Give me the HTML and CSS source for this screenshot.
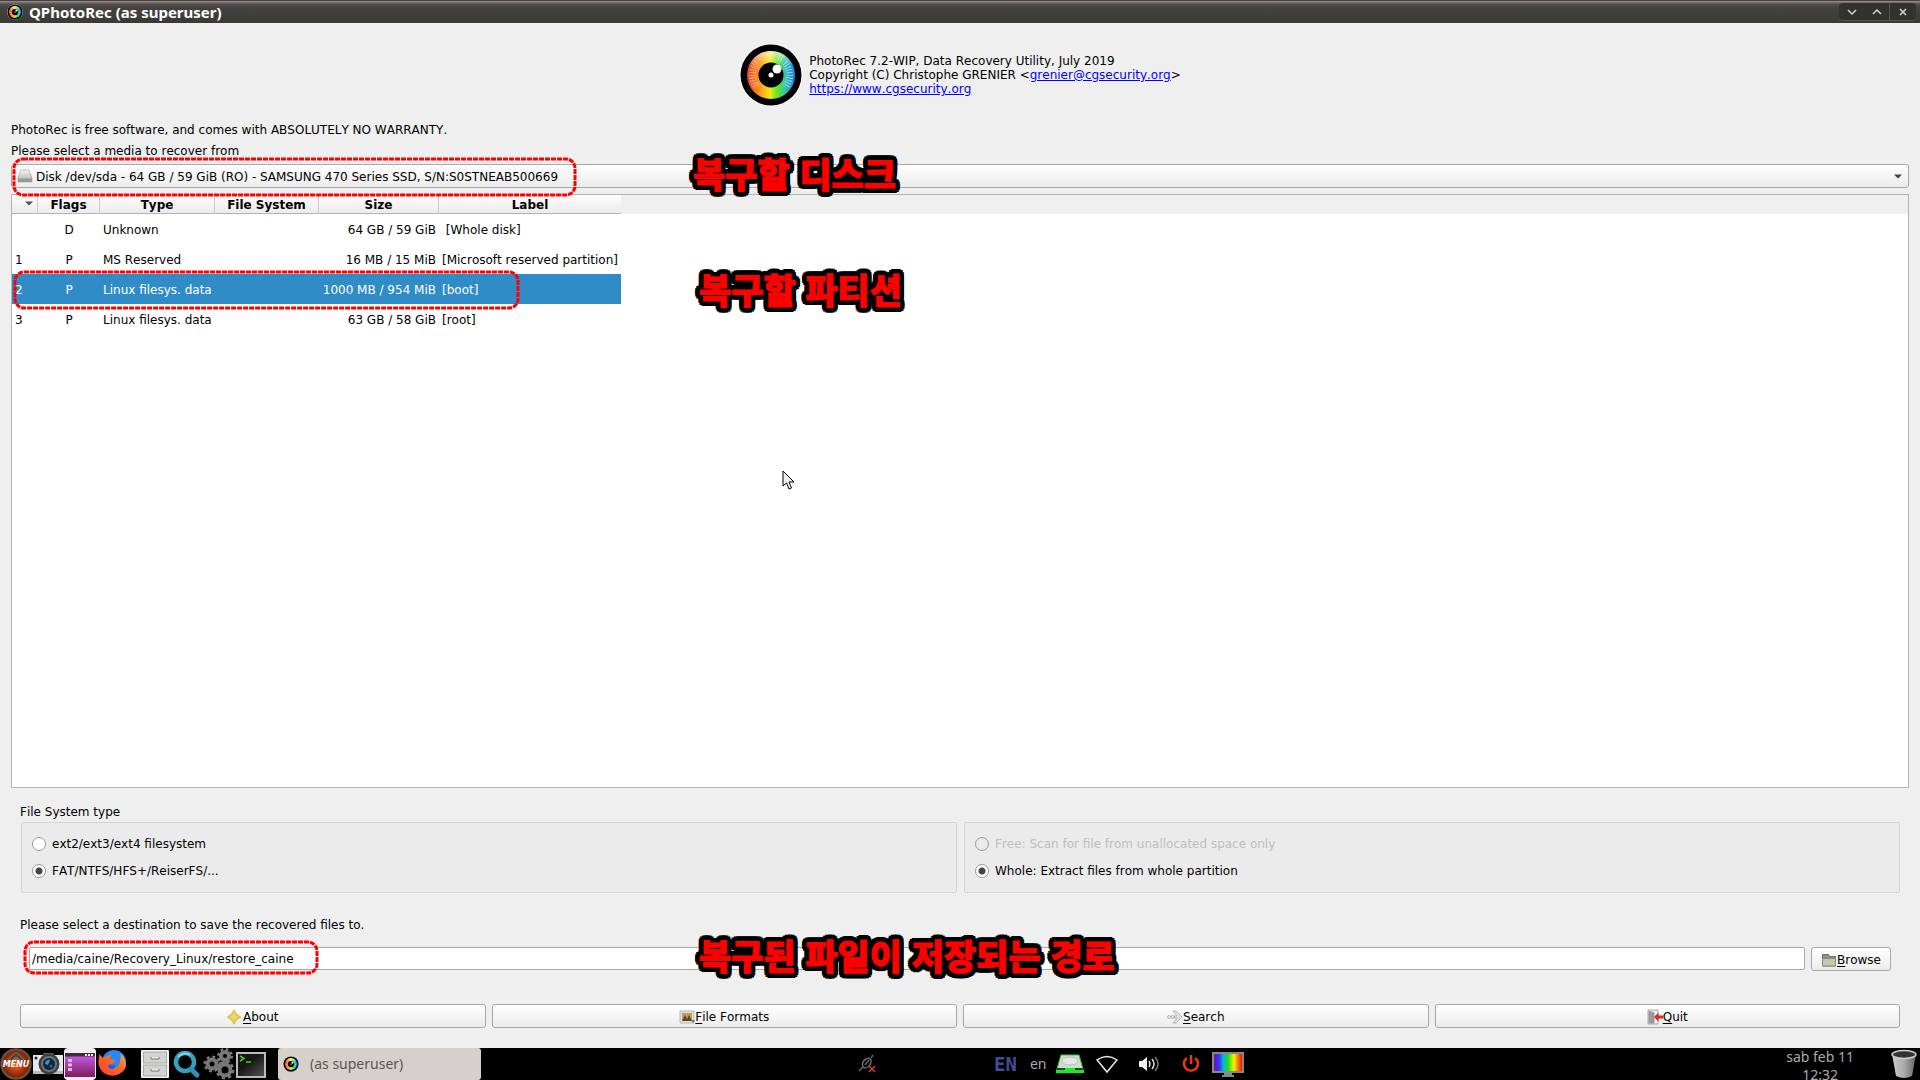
FILE: index.html
```html
<!DOCTYPE html>
<html lang="en">

<head>
    <meta charset="UTF-8">
    <meta name="viewport" content="width=device-width, initial-scale=1.0">
    <title>QPhotoRec (as superuser)</title>
    <link rel="stylesheet" href="styles.css">
</head>

<body>
    <!-- Shared icon shapes -->
    <svg class="defs" aria-hidden="true">
        <defs>
            <linearGradient id="rainbow">
                <stop offset="0" stop-color="#e8402a" />
                <stop offset=".25" stop-color="#ff9020" />
                <stop offset=".48" stop-color="#f2ea10" />
                <stop offset=".62" stop-color="#66e820" />
                <stop offset=".8" stop-color="#30c0b0" />
                <stop offset="1" stop-color="#2080f0" />
            </linearGradient>
            <linearGradient id="gloss" x2="0" y2="1">
                <stop offset="0" stop-color="#fff" stop-opacity=".65" />
                <stop offset=".3" stop-color="#fff" stop-opacity="0" />
            </linearGradient>
            <linearGradient id="metal" x2="0" y2="1">
                <stop offset="0" stop-color="#f4f4f4" />
                <stop offset="1" stop-color="#aaa" />
            </linearGradient>
            <symbol id="eye" viewBox="0 0 64 64">
                <circle cx="32" cy="32" r="31.5" fill="#fff" />
                <circle cx="32" cy="32" r="30.5" fill="#000" />
                <circle cx="32" cy="32" r="24" fill="url(#rainbow)" />
                <circle cx="32" cy="32" r="24" fill="url(#gloss)" />
                <g fill="none" stroke="#fff" stroke-width="7" stroke-dasharray=".7 1.9" opacity=".65">
                    <path d="M18 20a18 18 0 0 0 0 24M46 20a18 18 0 0 1 0 24" />
                    <path d="M40 14a20 20 0 0 1 4 2" />
                </g>
                <circle cx="32" cy="32" r="12.5" fill="#000" />
                <circle cx="38" cy="26" r="4.5" fill="#fff" />
                <circle cx="32" cy="32" r="2.5" fill="#fff" />
            </symbol>
        </defs>
    </svg>

    <header class="titlebar">
        <svg class="title-icon"><use href="#eye" /></svg>
        <h1>QPhotoRec (as superuser)</h1>
        <div class="window-controls">
            <button aria-label="Minimize"><svg viewBox="0 0 10 10"><path d="M1 3l4 4 4-4" /></svg></button>
            <button aria-label="Maximize"><svg viewBox="0 0 10 10"><path d="M1 7l4-4 4 4" /></svg></button>
            <button class="close" aria-label="Close"><svg viewBox="0 0 10 10"><path d="M2 2l6 6M8 2L2 8" /></svg></button>
        </div>
    </header>

    <main class="window">
        <section class="about">
            <svg class="logo"><use href="#eye" /></svg>
            <p>PhotoRec 7.2-WIP, Data Recovery Utility, July 2019<br>
                Copyright (C) Christophe GRENIER &lt;<a href="mailto:grenier@cgsecurity.org">grenier@cgsecurity.org</a>&gt;<br>
                <a href="https://www.cgsecurity.org">https://www.cgsecurity.org</a></p>
        </section>

        <p class="line">PhotoRec is free software, and comes with ABSOLUTELY NO WARRANTY.</p>
        <label class="line media-label" for="media">Please select a media to recover from</label>
        <div class="combo">
            <svg class="disk-icon" viewBox="0 0 16 16">
                <path d="M4 2h8l3 8v4H1v-4z" fill="url(#metal)" stroke="#999" stroke-width=".6" />
                <path d="M1 10.500h14V14H1z" fill="#999" />
            </svg>
            <select id="media">
                <option>Disk /dev/sda - 64 GB / 59 GiB (RO) - SAMSUNG 470 Series SSD, S/N:S0STNEAB500669</option>
            </select>
            <svg class="combo-arrow" viewBox="0 0 8 5"><path d="M0 .5h8L4 4.500z" /></svg>
        </div>

        <div class="partitions">
            <table>
                <thead>
                    <tr>
                        <th class="col-num" aria-label="Number"><svg class="sort" viewBox="0 0 8 5"><path d="M0 .5h8L4 4.500z" /></svg></th>
                        <th class="col-flags">Flags</th>
                        <th class="col-type">Type</th>
                        <th class="col-fs">File System</th>
                        <th class="col-size">Size</th>
                        <th class="col-label">Label</th>
                    </tr>
                </thead>
                <tbody>
                    <tr>
                        <td></td>
                        <td>D</td>
                        <td>Unknown</td>
                        <td></td>
                        <td>64 GB / 59 GiB</td>
                        <td>&nbsp;[Whole disk]</td>
                    </tr>
                    <tr>
                        <td>1</td>
                        <td>P</td>
                        <td>MS Reserved</td>
                        <td></td>
                        <td>16 MB / 15 MiB</td>
                        <td>[Microsoft reserved partition]</td>
                    </tr>
                    <tr class="selected">
                        <td>2</td>
                        <td>P</td>
                        <td>Linux filesys. data</td>
                        <td></td>
                        <td>1000 MB / 954 MiB</td>
                        <td>[boot]</td>
                    </tr>
                    <tr>
                        <td>3</td>
                        <td>P</td>
                        <td>Linux filesys. data</td>
                        <td></td>
                        <td>63 GB / 58 GiB</td>
                        <td>[root]</td>
                    </tr>
                </tbody>
            </table>
        </div>

        <div class="options">
            <p class="line">File System type</p>
            <div class="groups">
                <div class="group">
                    <label><input type="radio" name="fs">ext2/ext3/ext4 filesystem</label>
                    <label><input type="radio" name="fs" checked>FAT/NTFS/HFS+/ReiserFS/...</label>
                </div>
                <div class="group">
                    <label class="disabled"><input type="radio" name="scan" disabled>Free: Scan for file from unallocated space only</label>
                    <label><input type="radio" name="scan" checked>Whole: Extract files from whole partition</label>
                </div>
            </div>

            <label class="line" for="dest">Please select a destination to save the recovered files to.</label>
            <div class="destination">
                <input type="text" id="dest" value="/media/caine/Recovery_Linux/restore_caine">
                <button class="btn browse">
                    <svg viewBox="0 0 16 16">
                        <path d="M1.500 14V2.500h6l1 2h6V14z" fill="#8d937c" stroke="#6f7562" />
                        <path d="M1.500 6.500h13V14h-13z" fill="#c3c8b2" stroke="#858b76" />
                    </svg><span><u>B</u>rowse</span>
                </button>
            </div>

            <div class="buttons">
                <button class="btn">
                    <svg viewBox="0 0 16 16"><path d="M7 1.500Q8.500 6 13 8 8.500 10 7 14.500 5.500 10 1 8 5.500 6 7 1.500z" fill="#f0dc60" stroke="#dcc65a" stroke-width="2" stroke-linejoin="round" /></svg><span><u>A</u>bout</span>
                </button>
                <button class="btn">
                    <svg viewBox="0 0 16 16">
                        <path d="M1 2h14v12H1z" fill="#ddd" stroke="#bbb" />
                        <path d="M3 4h10v8H3z" fill="#c89c50" />
                        <path d="M3 12l3-6 2 4 2-4 3 6z" fill="#5a4630" />
                        <path d="M12 11h4l-2 3z" fill="#777" />
                    </svg><span><u>F</u>ile Formats</span>
                </button>
                <button class="btn">
                    <svg viewBox="0 0 16 16">
                        <path d="M6 2h3l6 6-6 6H6l4-5H7V7h3z" fill="#e2e2e2" stroke="#aaa" stroke-width=".8" />
                        <circle cx="2" cy="8" r="1.500" fill="#eee" stroke="#aaa" stroke-width=".8" />
                        <circle cx="5.500" cy="8" r="1.500" fill="#eee" stroke="#aaa" stroke-width=".8" />
                    </svg><span><u>S</u>earch</span>
                </button>
                <button class="btn">
                    <svg viewBox="0 0 16 16">
                        <path d="M1 1h10v14H1z" fill="#f0f0f0" stroke="#aaa" />
                        <path d="M1.500 1.500l6 2v11h-6z" fill="#999" />
                        <path d="M7 8l4.500-4.500v3H16v3h-4.500v3z" fill="#e02a20" />
                    </svg><span><u>Q</u>uit</span>
                </button>
            </div>
        </div>
    </main>

    <footer class="taskbar">
        <nav class="launchers">
            <button aria-label="Menu">
                <svg viewBox="0 0 32 32">
                    <radialGradient id="menu-bg">
                        <stop offset=".3" stop-color="#e04a10" />
                        <stop offset="1" stop-color="#6a1c04" />
                    </radialGradient>
                    <circle cx="16" cy="16" r="14.500" fill="url(#menu-bg)" stroke="#6d4c38" stroke-width="2.500" />
                    <path d="M6 14L16 4l10 10-3 1-7-6-7 6z" fill="#444" stroke="#999" stroke-width=".6" />
                    <text x="16" y="19" class="menu-text">MENU</text>
                </svg>
            </button>
            <button aria-label="Camera">
                <svg viewBox="0 0 32 32">
                    <path d="M1 7h30v19H1z" fill="#e9e9e9" />
                    <path d="M12 5h9l2 4H10z" fill="#666" />
                    <path d="M1 23h30v3H1z" fill="#bbb" />
                    <circle cx="4" cy="10" r="1.500" fill="#222" />
                    <circle cx="17" cy="16" r="10.500" fill="#3a4146" />
                    <circle cx="17" cy="16" r="8" fill="#6a7478" />
                    <circle cx="17" cy="16" r="6" fill="#182430" />
                    <path d="M13 16a4 4 0 0 1 5-4l-2 5z" fill="#2a9ae8" />
                    <circle cx="19" cy="18" r="1.500" fill="#1a6ab8" />
                </svg>
            </button>
            <button aria-label="Desktop">
                <svg viewBox="0 0 32 32">
                    <linearGradient id="desk-bg" x2="0" y2="1">
                        <stop offset="0" stop-color="#d061f8" />
                        <stop offset="1" stop-color="#7d1c58" />
                    </linearGradient>
                    <rect width="32" height="32" rx="4" fill="#f1eef1" />
                    <path d="M1 5h30v24H1z" fill="url(#desk-bg)" />
                    <path d="M1 5h30v3.500H1z" fill="#3b3038" />
                    <path d="M21 6h2v2h-2zM24 6h2v2h-2zM27 6h2v2h-2z" fill="#eee" />
                    <path d="M4 11h4v3H4zM4 15.500h4v3H4zM4 20h4v3H4z" fill="#dbb9dd" />
                </svg>
            </button>
            <button aria-label="Firefox">
                <svg viewBox="0 0 32 32">
                    <linearGradient id="fox" x1="0" y1="1" x2="1" y2="0">
                        <stop offset="0" stop-color="#ff3b3b" />
                        <stop offset=".6" stop-color="#ff6a20" />
                        <stop offset="1" stop-color="#ffb52e" />
                    </linearGradient>
                    <circle cx="18" cy="14" r="12" fill="#2887f5" />
                    <path d="M3 6l4 4q2-2 5-2l3-2-1 5 5 1q0 3-4 4l-3 1q2 5 7 3 5-2 5-7l1-5-1-3q6 5 6 13A14 13.500 0 1 1 3 10z" fill="url(#fox)" />
                    <path d="M12 17q3-1 7 0 1 4-4 4-3 0-3-4z" fill="#2361d8" />
                </svg>
            </button>
            <button class="group-start" aria-label="Files">
                <svg viewBox="0 0 32 32">
                    <rect x="2" y="2" width="28" height="28" rx="1" fill="#f2f2f0" />
                    <rect x="4.500" y="4" width="23" height="11" fill="#d2d2d0" stroke="#aaa" />
                    <rect x="4.500" y="17" width="23" height="11" fill="#d2d2d0" stroke="#aaa" />
                    <path d="M12 9v2h8V9M12 21v2h8v-2" fill="#eee" stroke="#777" />
                </svg>
            </button>
            <button aria-label="Find">
                <svg viewBox="0 0 32 32">
                    <circle cx="14" cy="14" r="9" fill="none" stroke="#36a0bf" stroke-width="4.500" />
                    <path d="M7 9a9 9 0 0 1 12-2" fill="none" stroke="#8cd3e6" stroke-width="2" />
                    <path d="M20 21l6 6" stroke="#3292b2" stroke-width="5" stroke-linecap="round" />
                </svg>
            </button>
            <button aria-label="Settings">
                <svg viewBox="0 0 32 32" fill="none" stroke="#777">
                    <g stroke-width="4">
                        <circle cx="9" cy="16" r="4.500" />
                        <circle cx="22" cy="8" r="4" />
                        <circle cx="22" cy="22" r="5.500" />
                    </g>
                    <g stroke-width="3">
                        <circle cx="9" cy="16" r="7" stroke-dasharray="2.750 2.750" />
                        <circle cx="22" cy="8" r="6.500" stroke-dasharray="2.550 2.550" />
                        <circle cx="22" cy="22" r="8" stroke-dasharray="3.140 3.140" />
                    </g>
                </svg>
            </button>
            <button aria-label="Terminal">
                <svg viewBox="0 0 32 32">
                    <linearGradient id="term" x2="1" y2="1">
                        <stop offset=".4" stop-color="#151515" />
                        <stop offset="1" stop-color="#555" />
                    </linearGradient>
                    <rect x="2" y="5" width="28" height="24" fill="url(#term)" stroke="#bbb" stroke-width="2" />
                    <path d="M5 8l4 2.500L5 13M11 14h5" fill="none" stroke="#35d81c" stroke-width="1.500" />
                </svg>
            </button>
        </nav>
        <button class="task">
            <svg><use href="#eye" /></svg>
            (as superuser)
        </button>
        <div class="tray">
            <svg class="plug" viewBox="0 0 20 20">
                <path d="M2 17l4-4M14 4l2-3M6 13q-2-5 3-8l3-1 2 2q0 5-3 7-3 2-5 0zM8 11l4-5" fill="none" stroke="#666" stroke-width="1.500" />
                <path d="M12 12l6 6M18 12l-6 6" stroke="#d84a30" stroke-width="1.300" />
            </svg>
            <span class="layout">EN</span>
            <span class="lang">en</span>
            <svg class="mount" viewBox="0 0 32 32">
                <path d="M7 7h18l4 14v3H3v-3z" fill="#cfdcd0" stroke="#3c3" />
                <ellipse cx="16" cy="13" rx="8" ry="4" fill="#e2e9e2" stroke="#b0c9b2" />
                <path d="M3 20h26v2H3z" fill="#2c4030" />
                <path d="M2 22h28v3H2zM11 20h10v3H11z" fill="#19ed19" />
            </svg>
            <svg class="wifi" viewBox="0 0 24 24"><path d="M2 8q10-7 20 0L12 20z" fill="none" stroke="#eee" stroke-width="1.500" /></svg>
            <svg class="volume" viewBox="0 0 24 24">
                <path d="M2 9h3l5-4v14l-5-4H2z" fill="#eee" />
                <path d="M12 9q2 3 0 6M15 7q4 5 0 10" fill="none" stroke="#ddd" stroke-width="1.500" />
                <path d="M18 5q6 7 0 14" fill="none" stroke="#777" stroke-width="1.500" />
            </svg>
            <svg class="power" viewBox="0 0 24 24"><path d="M8 6a7 7 0 1 0 8 0M12 3v9" fill="none" stroke="#e8380d" stroke-width="2.500" /></svg>
            <svg class="screen" viewBox="0 0 32 32">
                <linearGradient id="bars">
                    <stop offset="0" stop-color="#7a0a9a" />
                    <stop offset=".2" stop-color="#3a30ff" />
                    <stop offset=".35" stop-color="#00b8e0" />
                    <stop offset=".5" stop-color="#18e018" />
                    <stop offset=".7" stop-color="#f4f400" />
                    <stop offset=".85" stop-color="#ff6a00" />
                    <stop offset="1" stop-color="#e00000" />
                </linearGradient>
                <path d="M1 5h30v19H1z" fill="url(#bars)" stroke="#888" stroke-width="2" />
                <path d="M12 25h8v2h2v2H10v-2h2z" fill="#888" />
            </svg>
        </div>
        <time class="clock">sab feb 11<br>12:32</time>
        <svg class="trash" viewBox="0 0 28 32">
            <linearGradient id="bin">
                <stop offset="0" stop-color="#ccc" />
                <stop offset=".5" stop-color="#aaa" />
                <stop offset="1" stop-color="#666" />
            </linearGradient>
            <path d="M2 6l4 22q8 4 16 0l4-22z" fill="url(#bin)" />
            <ellipse cx="14" cy="6.500" rx="12" ry="4" fill="#333" stroke="#ccc" stroke-width="1.500" />
        </svg>
    </footer>

    <!-- Notes drawn over the window -->
    <div class="marker marker-disk"><svg><rect /></svg></div>
    <div class="marker marker-partition"><svg><rect /></svg></div>
    <div class="marker marker-path"><svg><rect /></svg></div>
    <p class="note note-disk" lang="ko">복구할 디스크</p>
    <p class="note note-partition" lang="ko">복구할 파티션</p>
    <p class="note note-path" lang="ko">복구된 파일이 저장되는 경로</p>
    <svg class="cursor" viewBox="0 0 14 20"><path d="M1 1v15l3.500-3 2.500 6 2.500-1L7 12h5z" fill="#eee" stroke="#000" /></svg>
</body>

</html>
```

FILE: styles.css
```css
/* Global Styles */
* {
    margin: 0;
    padding: 0;
    box-sizing: border-box;
}

body {
    display: flex;
    flex-direction: column;
    height: 100vh;
    overflow: hidden;
    position: relative;
    background-color: #efefef;
    color: #000;
    font-family: 'DejaVu Sans', sans-serif;
    font-size: 12px;
    font-kerning: none;
    line-height: 14px;
}

button,
input,
select {
    font: inherit;
    font-kerning: none;
    color: inherit;
}

svg {
    display: block;
    flex: none;
}

.defs {
    position: absolute;
    width: 0;
    height: 0;
}

/* Title bar */
.titlebar {
    display: flex;
    align-items: center;
    flex: none;
    height: 23px;
    padding: 0 4px 0 7px;
    border-top: 1px solid #4a4040;
    background: linear-gradient(#989090, #55504c 3px, #45433f 6px, #3a3936);
    color: #fff;
}

.title-icon {
    width: 16px;
    height: 16px;
    margin-right: 6px;
}

h1 {
    font: bold 15px/20px 'Noto Sans', sans-serif;
}

.window-controls {
    display: flex;
    height: 18px;
    margin-left: auto;
    border-radius: 4px;
    border-bottom: 1px solid #55534f;
    background-color: #33322f;
}

.window-controls button {
    display: flex;
    align-items: center;
    justify-content: center;
    width: 25px;
    border: none;
    background: none;
}

.window-controls .close {
    width: 27px;
    border-left: 1px solid #55534f;
}

.window-controls svg {
    width: 10px;
    height: 10px;
    fill: none;
    stroke: #d8d4cc;
    stroke-width: 1.5;
}

/* Main window */
.window {
    display: flex;
    flex-direction: column;
    flex: 1;
    min-height: 0;
    padding: 20px 11px;
}

.about {
    display: flex;
    align-items: center;
    justify-content: center;
    gap: 6px;
    margin-bottom: 16px;
}

.logo {
    width: 64px;
    height: 64px;
}

.about a {
    color: #00f;
}

.line {
    display: block;
    margin-bottom: 7px;
}

.media-label {
    margin-bottom: 6px;
}

.combo {
    position: relative;
    flex: none;
    height: 24px;
    margin-bottom: 6px;
}

.combo select {
    width: 100%;
    height: 24px;
    padding: 2px 24px 0;
    border: 1px solid #a8a8a8;
    border-radius: 3px;
    background: linear-gradient(#fff, #ececec);
    appearance: none;
}

.disk-icon {
    position: absolute;
    left: 6px;
    top: 4px;
    width: 16px;
    height: 16px;
}

.combo-arrow {
    position: absolute;
    right: 7px;
    top: 10px;
    width: 8px;
    height: 5px;
    fill: #444;
}

/* Partition table */
.partitions {
    flex: 1;
    min-height: 0;
    margin-bottom: 17px;
    border: 1px solid #b4b4b4;
    background: linear-gradient(#efefef 19px, #fff 19px);
}

table {
    table-layout: fixed;
    width: 609px;
    border-collapse: separate;
    border-spacing: 0;
}

th {
    height: 19px;
    padding-top: 2px;
    border-right: 1px solid #ccc;
    border-bottom: 1px solid #b4b4b4;
    background: linear-gradient(#fdfdfd, #ebebeb);
    font-weight: bold;
}

th:last-child {
    border-right: none;
}

.col-num {
    width: 26px;
}

.col-flags {
    width: 62px;
}

.col-type {
    width: 115px;
}

.col-fs {
    width: 104px;
}

.col-size {
    width: 120px;
}

.sort {
    width: 8px;
    height: 5px;
    margin: 0 4px 4px auto;
    fill: #555;
}

td {
    height: 30px;
    padding: 2px 3px 0;
    white-space: nowrap;
}

td:nth-child(2) {
    text-align: center;
}

td:nth-child(5) {
    text-align: right;
}

.selected {
    background-color: #308cc6;
    color: #fff;
}

/* Options */
.options {
    padding: 0 9px;
}

.options > .line {
    margin-bottom: 3px;
}

.groups {
    display: grid;
    grid-template-columns: 1fr 1fr;
    gap: 7px;
    margin: 0 0 25px 1px;
}

.group {
    display: flex;
    flex-direction: column;
    gap: 13px;
    height: 71px;
    padding: 14px 10px;
    border: 1px solid #d4d4d4;
    border-radius: 2px;
    background-color: #ebebeb;
}

.group label {
    display: flex;
    align-items: center;
    gap: 6px;
}

.group .disabled {
    color: #bebebe;
}

input[type="radio"] {
    width: 14px;
    height: 14px;
    border: 1px solid #999;
    border-radius: 50%;
    background-color: #fff;
    appearance: none;
}

input[type="radio"]:checked {
    background: radial-gradient(circle, #444 3px, #fff 4px);
}

input[type="radio"]:disabled {
    background: none;
}

.destination {
    display: flex;
    gap: 6px;
    margin: 15px 9px 33px;
}

.destination input {
    flex: 1;
    height: 23px;
    padding: 0 2px;
    border: 1px solid #a8a8a8;
    border-radius: 2px;
    background-color: #fff;
}

.buttons {
    display: grid;
    grid-template-columns: repeat(4, 1fr);
    gap: 6px;
}

.btn {
    display: flex;
    align-items: center;
    justify-content: center;
    height: 24px;
    padding-top: 1px;
    border: 1px solid #a8a8a8;
    border-radius: 3px;
    background: linear-gradient(#fff, #ececec);
}

.btn svg {
    width: 16px;
    height: 16px;
}

.btn u {
    text-underline-offset: 2px;
}

.browse {
    width: 80px;
}

/* Taskbar */
.taskbar {
    display: flex;
    align-items: center;
    flex: none;
    height: 32px;
    background-color: #000;
    color: #aaa;
    font-family: 'Noto Sans', sans-serif;
    font-size: 14px;
}

.launchers {
    display: flex;
}

.launchers button {
    width: 32px;
    height: 32px;
    border: none;
    background: none;
}

.launchers .group-start {
    margin-left: 11px;
}

.menu-text {
    fill: #fff;
    font: italic bold 8px 'DejaVu Sans', sans-serif;
    text-anchor: middle;
}

.task {
    display: flex;
    align-items: center;
    gap: 11px;
    width: 203px;
    height: 32px;
    margin-left: 11px;
    padding-left: 5px;
    border: none;
    border-radius: 3px;
    background-color: #d6d0cc;
    color: #555;
}

.task svg {
    width: 16px;
    height: 16px;
}

.tray {
    display: flex;
    align-items: center;
    margin: 0 auto 0 376px;
}

.plug {
    width: 20px;
    height: 20px;
    margin-right: 117px;
}

.layout {
    margin-right: 13px;
    color: #414e94;
    font: bold 19px 'DejaVu Sans Mono', monospace;
}

.lang {
    margin-right: 8px;
}

.mount,
.screen {
    width: 32px;
    height: 32px;
}

.wifi,
.volume,
.power {
    width: 24px;
    height: 24px;
}

.wifi {
    margin: 0 18px 0 9px;
}

.volume {
    margin-right: 18px;
}

.power {
    margin-right: 9px;
}

.clock {
    align-self: flex-start;
    margin-right: 36px;
    line-height: 18px;
    text-align: center;
}

.trash {
    width: 28px;
    height: 32px;
    margin-right: 2px;
}

/* Notes over the window */
.marker {
    position: absolute;
}

.marker svg {
    width: 100%;
    height: 100%;
    overflow: visible;
}

.marker rect {
    width: 100%;
    height: 100%;
    rx: 9px;
    fill: none;
    stroke: #f00;
    stroke-width: 3;
    stroke-dasharray: 5 1;
}

.marker-disk {
    left: 14px;
    top: 159px;
    width: 561px;
    height: 36px;
}

.marker-partition {
    left: 15px;
    top: 272px;
    width: 503px;
    height: 36px;
}

.marker-path {
    left: 25px;
    top: 942px;
    width: 292px;
    height: 31px;
}

.note {
    position: absolute;
    color: #f00;
    font: 900 35px/40px 'Noto Sans CJK KR', sans-serif;
    white-space: nowrap;
    -webkit-text-stroke: 1px #f00;
    text-shadow: 5px 0 #000, -5px 0 #000, 0 5px #000, 0 -5px #000,
        4px 4px #000, -4px 4px #000, 4px -4px #000, -4px -4px #000,
        5px 2px #000, -5px 2px #000, 5px -2px #000, -5px -2px #000,
        2px 5px #000, -2px 5px #000, 2px -5px #000, -2px -5px #000,
        2px 0 #000, -2px 0 #000, 0 2px #000, 0 -2px #000;
}

.note-disk {
    left: 693px;
    top: 153px;
}

.note-partition {
    left: 699px;
    top: 269px;
}

.note-path {
    left: 699px;
    top: 935px;
}

.cursor {
    position: absolute;
    left: 782px;
    top: 470px;
    width: 14px;
    height: 20px;
}
```
